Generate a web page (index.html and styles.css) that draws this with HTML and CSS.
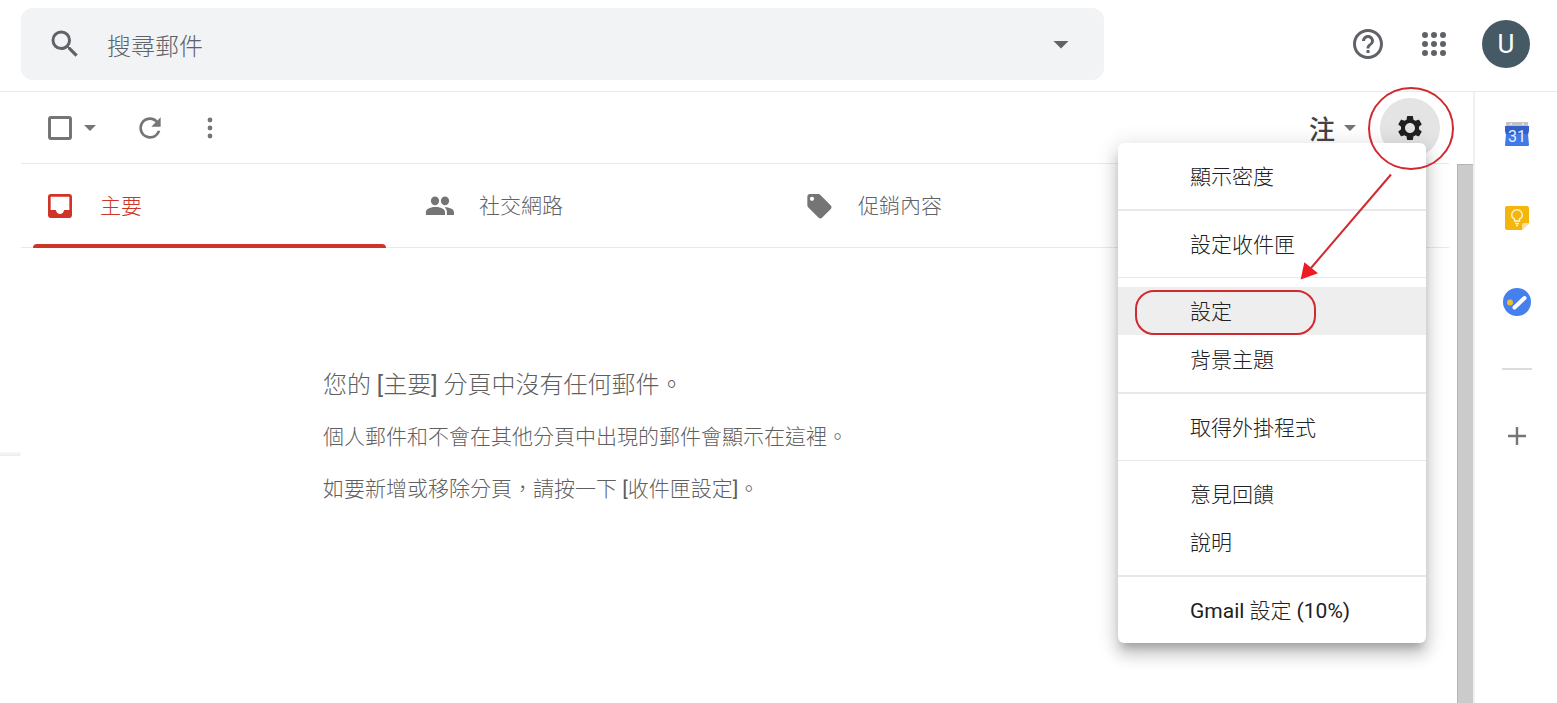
FILE: index.html
```html
<!DOCTYPE html>
<html lang="zh-TW">
<head>
    <meta charset="UTF-8">
    <meta name="viewport" content="width=device-width, initial-scale=1.0">
    <title>Gmail</title>
    <link rel="stylesheet" href="styles.css">
</head>
<body>

    <header class="header">
        <form class="search">
            <button type="button" class="icon-btn" aria-label="搜尋">
                <svg width="36" height="36" viewBox="0 0 24 24"><path d="M15.5 14h-.79l-.28-.27A6.47 6.47 0 0 0 16 9.5 6.5 6.5 0 1 0 9.5 16c1.61 0 3.09-.59 4.23-1.57l.27.28v.79l5 4.99L20.49 19l-4.99-5zm-6 0C7.01 14 5 11.99 5 9.5S7.01 5 9.5 5 14 7.01 14 9.5 11.99 14 9.5 14z"/></svg>
            </button>
            <input type="text" class="search-input" placeholder="搜尋郵件" aria-label="搜尋郵件">
            <button type="button" class="icon-btn" aria-label="搜尋選項">
                <svg width="36" height="36" viewBox="0 0 24 24"><path d="M7 10l5 5 5-5z"/></svg>
            </button>
        </form>
        <div class="header-right">
            <button class="icon-btn" aria-label="支援">
                <svg width="36" height="36" viewBox="0 0 24 24"><path d="M11 18h2v-2h-2v2zm1-16C6.48 2 2 6.48 2 12s4.48 10 10 10 10-4.48 10-10S17.52 2 12 2zm0 18c-4.41 0-8-3.59-8-8s3.59-8 8-8 8 3.59 8 8-3.59 8-8 8zm0-14c-2.21 0-4 1.79-4 4h2c0-1.1.9-2 2-2s2 .9 2 2c0 2-3 1.75-3 5h2c0-2.25 3-2.5 3-5 0-2.21-1.79-4-4-4z"/></svg>
            </button>
            <button class="icon-btn" aria-label="Google 應用程式">
                <svg width="36" height="36" viewBox="0 0 24 24">
                    <circle cx="6" cy="6" r="2"/><circle cx="12" cy="6" r="2"/><circle cx="18" cy="6" r="2"/>
                    <circle cx="6" cy="12" r="2"/><circle cx="12" cy="12" r="2"/><circle cx="18" cy="12" r="2"/>
                    <circle cx="6" cy="18" r="2"/><circle cx="12" cy="18" r="2"/><circle cx="18" cy="18" r="2"/>
                </svg>
            </button>
            <button class="avatar">U</button>
        </div>
    </header>

    <div class="page">
        <div class="nav-edge"><div class="nav-line"></div></div>

        <main class="main">
            <div class="toolbar">
                <input type="checkbox" class="select-all" aria-label="選取">
                <button class="caret-btn" aria-label="選取選項"><span class="caret"></span></button>
                <button class="icon-btn refresh" aria-label="重新整理">
                    <svg width="32" height="32" viewBox="0 0 24 24"><path d="M17.65 6.35A7.96 7.96 0 0 0 12 4c-4.42 0-7.99 3.58-7.99 8s3.57 8 7.99 8c3.73 0 6.84-2.55 7.73-6h-2.08A5.99 5.99 0 0 1 12 18c-3.31 0-6-2.69-6-6s2.69-6 6-6c1.66 0 3.14.69 4.22 1.78L13 11h7V4l-2.35 2.35z"/></svg>
                </button>
                <button class="icon-btn more" aria-label="更多">
                    <svg width="32" height="32" viewBox="0 0 24 24"><circle cx="12" cy="6" r="1.8"/><circle cx="12" cy="12" r="1.8"/><circle cx="12" cy="18" r="1.8"/></svg>
                </button>

                <button class="input-tool">注<span class="caret"></span></button>
                <div class="settings">
                    <button class="gear" aria-label="設定">
                        <svg width="30" height="30" viewBox="0 0 24 24"><path d="M19.14 12.94c.04-.3.06-.61.06-.94 0-.32-.02-.64-.07-.94l2.03-1.58c.18-.14.23-.41.12-.61l-1.92-3.32c-.12-.22-.37-.29-.59-.22l-2.39.96c-.5-.38-1.03-.7-1.62-.94l-.36-2.54c-.04-.24-.24-.41-.48-.41h-3.84c-.24 0-.43.17-.47.41l-.36 2.54c-.59.24-1.13.57-1.62.94l-2.39-.96c-.22-.08-.47 0-.59.22L2.74 8.87c-.12.21-.08.47.12.61l2.03 1.58c-.05.3-.09.63-.09.94s.02.64.07.94l-2.03 1.58c-.18.14-.23.41-.12.61l1.92 3.32c.12.22.37.29.59.22l2.39-.96c.5.38 1.03.7 1.62.94l.36 2.54c.05.24.24.41.48.41h3.84c.24 0 .44-.17.47-.41l.36-2.54c.59-.24 1.13-.56 1.62-.94l2.39.96c.22.08.47 0 .59-.22l1.92-3.32c.12-.22.07-.47-.12-.61l-2.01-1.58zM12 16c-2.2 0-4-1.8-4-4s1.8-4 4-4 4 1.8 4 4-1.8 4-4 4z"/></svg>
                    </button>
                    <div class="menu">
                        <button class="menu-item">顯示密度</button>
                        <hr class="thick">
                        <button class="menu-item">設定收件匣</button>
                        <hr>
                        <button class="menu-item active">設定</button>
                        <button class="menu-item">背景主題</button>
                        <hr class="thick">
                        <button class="menu-item">取得外掛程式</button>
                        <hr>
                        <button class="menu-item">意見回饋</button>
                        <button class="menu-item">說明</button>
                        <hr class="thick">
                        <button class="menu-item"><span class="latin">Gmail</span> 設定 <span class="latin">(10%)</span></button>
                    </div>
                    <!-- gear -> settings hint -->
                    <svg class="hint" width="330" height="260" viewBox="0 0 330 260">
                        <ellipse cx="281" cy="48.5" rx="42" ry="40.5"/>
                        <rect x="6" y="211" width="179" height="43" rx="18"/>
                        <path d="M261 94.500L181 188"/>
                        <path class="head" d="M172 198l3-14 11 9z"/>
                    </svg>
                </div>
            </div>

            <div class="scroll-area">
                <div class="content">
                    <nav class="tabs">
                        <a href="#" class="tab selected">
                            <svg width="32" height="32" viewBox="0 0 24 24"><path d="M19 3H5c-1.1 0-2 .9-2 2v14c0 1.1.9 2 2 2h14c1.1 0 2-.9 2-2V5c0-1.1-.9-2-2-2zm0 12h-4c0 1.66-1.35 3-3 3s-3-1.34-3-3H5V5h14v10z"/></svg>
                            <span>主要</span>
                        </a>
                        <a href="#" class="tab">
                            <svg width="32" height="32" viewBox="0 0 24 24"><path d="M9 4.8a3.1 3.3 0 1 0 0 6.6 3.1 3.3 0 1 0 0-6.6zm7.500 0a3.1 3.3 0 1 0 0 6.6 3.1 3.3 0 1 0 0-6.6zM2.200 18.800v-2.400c0-2.400 4-3.700 7.200-3.700s7.100 1.300 7.100 3.700v2.400zM17.900 18.800v-2.400c0-1.400-.7-2.600-1.800-3.500 3.300 0 7.100 1.200 7.100 3.500v2.400z"/></svg>
                            <span>社交網路</span>
                        </a>
                        <a href="#" class="tab">
                            <svg width="32" height="32" viewBox="-1 0 24 24"><path fill-rule="evenodd" d="M20.6 11.6l-8-8c-.4-.4-.9-.6-1.4-.6H4.9c-1.1 0-1.9.9-1.9 2v6.5c0 .5.2 1 .6 1.4l7.9 7.9c.7.7 1.8.7 2.5 0l6.6-6.6c.7-.8.7-1.9 0-2.6zM6.500 8.200a1.600 1.600 0 1 1 0-3.200 1.600 1.600 0 1 1 0 3.200z"/></svg>
                            <span>促銷內容</span>
                        </a>
                    </nav>
                    <div class="empty">
                        <h2>您的 <span class="latin">[</span>主要<span class="latin">]</span> 分頁中沒有任何郵件。</h2>
                        <p>個人郵件和不會在其他分頁中出現的郵件會顯示在這裡。</p>
                        <p>如要新增或移除分頁，請按一下 <span class="latin">[</span>收件匣設定<span class="latin">]</span>。</p>
                    </div>
                </div>
                <div class="scrollbar"></div>
            </div>
        </main>

        <aside class="side-panel">
            <button class="app-btn" aria-label="日曆">
                <svg width="28" height="28" viewBox="0 0 28 28">
                    <path fill="#c3c3c3" d="M4 2h20a1 1 0 0 1 1 1v3H3V3a1 1 0 0 1 1-1z"/>
                    <circle cx="8" cy="4" r="1" fill="#eee"/><circle cx="20" cy="4" r="1" fill="#eee"/>
                    <path fill="#3460cc" d="M2 6h24v5l-1 4H3l-1-4z"/>
                    <path fill="#4079e8" d="M3 14h22l1 11q0 1-1 1H3q-1 0-1-1z"/>
                    <text x="14" y="22" text-anchor="middle" class="cal-day">31</text>
                </svg>
            </button>
            <button class="app-btn" aria-label="Keep">
                <svg width="28" height="28" viewBox="0 0 28 28">
                    <path fill="#f4b50c" d="M4 2h20a2 2 0 0 1 2 2v15l-7 7H4a2 2 0 0 1-2-2V4a2 2 0 0 1 2-2z"/>
                    <path fill="#fde293" d="M26 19h-5a2 2 0 0 0-2 2v5z"/>
                    <path fill="none" stroke="#fff3cf" stroke-width="1.4" d="M11.5 17v-2C9.5 14 8.7 12.6 8.7 11a5.3 5.3 0 0 1 10.6 0c0 1.6-.8 3-2.8 4v2zM12 19.5h4M13 21.5h2"/>
                </svg>
            </button>
            <button class="app-btn" aria-label="Tasks">
                <svg width="28" height="28" viewBox="0 0 28 28">
                    <circle cx="14" cy="14" r="14" fill="#4680ee"/>
                    <circle cx="7" cy="14.5" r="3" fill="#f1bd32"/>
                    <path stroke="#fff" stroke-width="4" stroke-linecap="round" d="M11.5 19.5l10-9.5"/>
                </svg>
            </button>
            <div class="side-divider"></div>
            <button class="app-btn" aria-label="取得外掛程式">
                <svg width="28" height="28" viewBox="0 0 28 28"><path stroke="#757575" stroke-width="2.4" d="M14 5v18M5 14h18"/></svg>
            </button>
        </aside>
    </div>

</body>
</html>
```
FILE: styles.css
```css
* {
    box-sizing: border-box;
}

body {
    margin: 0;
    min-height: 100vh;
    display: flex;
    flex-direction: column;
    background-color: #fff;
    color: #202124;
    font-family: Roboto, "Noto Sans CJK TC", sans-serif;
    font-size: 21px;
    font-weight: 300;
    overflow: hidden;
}

button {
    padding: 0;
    border: none;
    background: none;
    font: inherit;
    color: inherit;
    cursor: pointer;
}

svg {
    display: block;
}

.icon-btn {
    fill: #5f6368;
}

.latin {
    font-weight: 400;
}

/* Header */
.header {
    display: flex;
    align-items: center;
    justify-content: space-between;
    height: 92px;
    padding: 0 27px 4px 21px;
    border-bottom: 1px solid #e9eaeb;
}

.search {
    display: flex;
    align-items: center;
    flex: 0 1 1083px;
    height: 72px;
    padding: 0 25px 0 26px;
    border-radius: 12px;
    background-color: #f1f3f4;
}

.search-input {
    flex: 1;
    min-width: 0;
    margin: 0 24px;
    padding: 6px 0 0;
    border: none;
    outline: none;
    background: none;
    font: inherit;
    font-size: 24px;
    color: #202124;
}

.search-input::placeholder {
    color: #5f6368;
}

.header-right {
    display: flex;
    align-items: center;
    gap: 30px;
}

.avatar {
    width: 48px;
    height: 48px;
    border-radius: 50%;
    background-color: #455a64;
    color: #fff;
    font-size: 26px;
    font-weight: 400;
}

/* Page columns */
.page {
    flex: 1;
    display: flex;
}

.nav-edge {
    width: 21px;
    padding-top: 360px;
}

.nav-line {
    height: 4px;
    border-radius: 0 2px 2px 0;
    background: linear-gradient(#f8f8f8, #ececec);
}

.main {
    flex: 1;
    display: flex;
    flex-direction: column;
}

/* Toolbar */
.toolbar {
    display: flex;
    align-items: center;
    height: 72px;
    margin-right: 24px;
    padding: 0 9px 0 27px;
    border-bottom: 1px solid #e9eaeb;
}

.toolbar .icon-btn {
    fill: #757575;
}

.select-all {
    appearance: none;
    width: 24px;
    height: 24px;
    margin: 0 12px 0 0;
    border: 3px solid #757575;
    border-radius: 3px;
}

.caret {
    display: block;
    border: 6px solid transparent;
    border-top-color: #757575;
    border-bottom: none;
}

.refresh {
    margin-left: 38px;
}

.more {
    margin-left: 28px;
}

.input-tool {
    display: flex;
    align-items: center;
    gap: 9px;
    margin: 0 24px 0 auto;
    font-size: 26px;
    font-weight: 500;
    color: #444;
}

.settings {
    position: relative;
}

.gear {
    display: flex;
    align-items: center;
    justify-content: center;
    width: 60px;
    height: 60px;
    border-radius: 50%;
    background-color: #e4e4e4;
    fill: #202020;
}

.menu {
    position: absolute;
    top: 45px;
    right: 14px;
    z-index: 1;
    width: 308px;
    padding: 9px 0;
    border-radius: 6px;
    background-color: #fff;
    box-shadow: 0 12px 15px 1px rgba(0, 0, 0, 0.14), 0 4px 21px 3px rgba(0, 0, 0, 0.12), 0 8px 8px -4px rgba(0, 0, 0, 0.2);
}

.menu-item {
    display: block;
    width: 100%;
    height: 48px;
    padding: 0 0 2px 72px;
    text-align: left;
}

.menu-item.active {
    background-color: #eee;
}

.menu hr {
    height: 1px;
    margin: 9px 0;
    border: none;
    background-color: #e8e8e8;
}

.menu hr.thick {
    height: 2px;
}

.hint {
    position: absolute;
    top: -18px;
    right: -20px;
    z-index: 2;
    fill: none;
    stroke: #cf2a30;
    stroke-width: 2;
    pointer-events: none;
}

.hint .head {
    fill: #ed1c24;
    stroke: #ed1c24;
}

/* Mail list */
.scroll-area {
    flex: 1;
    display: flex;
}

.content {
    flex: 1;
}

.scrollbar {
    width: 16px;
    border-top: 1px solid #b4b4b4;
    border-left: 1px solid #b4b4b4;
    background-color: #cbcbcb;
}

.tabs {
    display: flex;
    height: 84px;
    margin-right: 8px;
    border-bottom: 1px solid #e9eaeb;
}

.tab {
    position: relative;
    display: flex;
    align-items: center;
    gap: 24px;
    flex: 0 1 379px;
    padding-left: 23px;
    color: #5f6368;
    fill: #757575;
    text-decoration: none;
}

.tab span {
    padding-bottom: 4px;
}

.tab.selected {
    color: #d03328;
    fill: #d03328;
}

.tab.selected::after {
    content: "";
    position: absolute;
    left: 12px;
    right: 14px;
    bottom: -1px;
    height: 4px;
    border-radius: 4px 4px 0 0;
    background-color: #d03328;
}

.empty {
    padding: 111px 0 0 302px;
    color: #5f5f5f;
}

.empty h2,
.empty p {
    margin: 0;
    line-height: 52px;
    font-weight: 300;
}

.empty h2 {
    font-size: 24px;
}

/* Side panel */
.side-panel {
    display: flex;
    flex-direction: column;
    align-items: center;
    width: 84px;
    padding: 28px 0 0 2px;
    border-left: 2px solid #eef0f1;
}

.app-btn {
    margin-bottom: 56px;
}

.cal-day {
    fill: #e8effd;
    font-size: 16px;
    font-weight: 400;
}

.side-divider {
    width: 30px;
    height: 2px;
    margin: -4px 0 52px;
    background-color: #dadce0;
}
```
